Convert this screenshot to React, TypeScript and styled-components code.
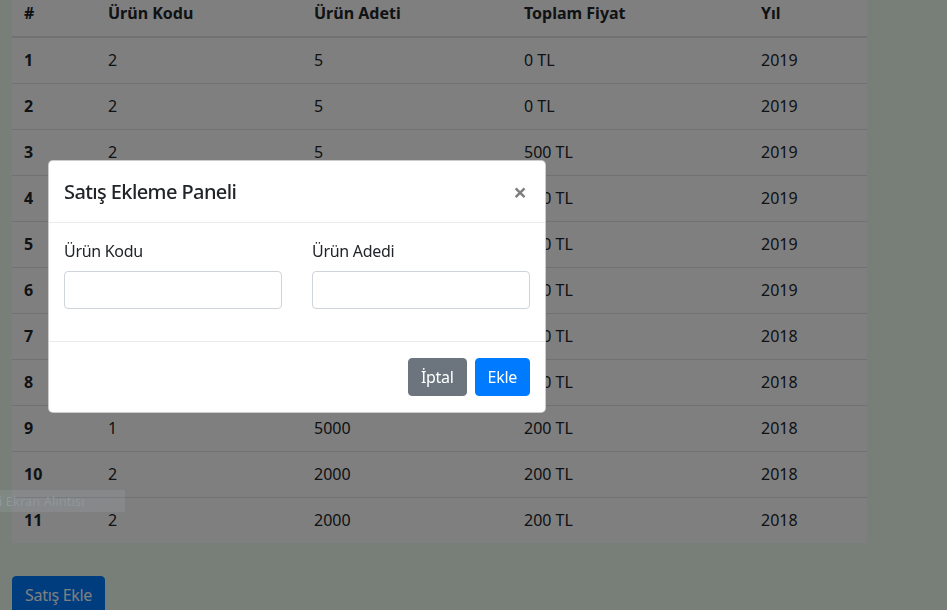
import React from "react";
import styled, { createGlobalStyle } from "styled-components";

const GlobalStyle = createGlobalStyle`
  * { box-sizing: border-box; }
  html, body {
    margin: 0;
    padding: 0;
    background: #f0fff0;
    color: #212529;
    font-family: "Noto Sans", "Open Sans", sans-serif;
    font-size: 16px;
    overflow: hidden;
  }
`;

const Page = styled.div`
  padding: 0 12px;
  height: 610px;
`;

const Table = styled.table`
  width: 855px;
  border-collapse: collapse;
  background: #fff;
  table-layout: fixed;
`;

const Th = styled.th<{ w: number }>`
  width: ${(p) => p.w}px;
  text-align: left;
  font-weight: 700;
  padding: 3px 12px 12px;
  line-height: 21px;
  border-bottom: 2px solid #dee2e6;
`;

const Td = styled.td<{ bold?: boolean; last?: boolean }>`
  padding: 12px;
  line-height: 21px;
  font-weight: ${(p) => (p.bold ? 700 : 400)};
  border-bottom: ${(p) => (p.last ? "none" : "1px solid #dee2e6")};
`;

const Button = styled.button<{ variant: "primary" | "secondary" }>`
  font-family: inherit;
  font-size: 16px;
  line-height: 24px;
  padding: 6px 12px;
  border-radius: 4px;
  border: 1px solid ${(p) => (p.variant === "primary" ? "#007bff" : "#6c757d")};
  background: ${(p) => (p.variant === "primary" ? "#007bff" : "#6c757d")};
  color: #fff;
  letter-spacing: -0.3px;
  cursor: pointer;
`;

const AddButton = styled(Button)`
  margin-top: 33px;
`;

const Backdrop = styled.div`
  position: fixed;
  inset: 0;
  background: rgba(0, 0, 0, 0.5);
`;

const Snip = styled.div`
  position: fixed;
  left: 0;
  top: 490px;
  width: 125px;
  height: 22px;
  background: rgba(200, 220, 235, 0.1);
  color: #8e979c;
  font-size: 13px;
  line-height: 22px;
  white-space: nowrap;
  overflow: hidden;
  text-indent: -1px;
`;

const Modal = styled.div`
  position: fixed;
  left: 48px;
  top: 160px;
  width: 498px;
  background: #fff;
  border: 1px solid rgba(0, 0, 0, 0.2);
  border-radius: 5px;
`;

const ModalHeader = styled.div`
  display: flex;
  align-items: center;
  justify-content: space-between;
  padding: 16px 15px 15px;
  border-bottom: 1px solid #e9ecef;
`;

const Title = styled.h5`
  margin: 0;
  font-size: 20px;
  font-weight: 500;
  line-height: 30px;
  letter-spacing: -0.6px;
`;

const Close = styled.span`
  font-size: 24px;
  font-weight: 700;
  line-height: 1;
  color: #000;
  opacity: 0.5;
  margin-right: 3px;
`;

const ModalBody = styled.div`
  display: grid;
  grid-template-columns: minmax(0, 1fr) minmax(0, 1fr);
  column-gap: 30px;
  padding: 16px 15px 32px;
  border-bottom: 1px solid #e9ecef;
`;

const Field = styled.div`
  display: flex;
  flex-direction: column;
  gap: 8px;
  min-width: 0;
`;

const Label = styled.label`
  line-height: 24px;
  letter-spacing: -0.3px;
`;

const Input = styled.input`
  width: 100%;
  min-width: 0;
  height: 38px;
  border: 1px solid #ced4da;
  border-radius: 4px;
  font-family: inherit;
  font-size: 16px;
  padding: 6px 12px;
`;

const ModalFooter = styled.div`
  display: flex;
  justify-content: flex-end;
  gap: 8px;
  padding: 16px 15px;
`;

const rows = [
  [1, 2, 5, "0 TL", 2019],
  [2, 2, 5, "0 TL", 2019],
  [3, 2, 5, "500 TL", 2019],
  [4, 2, 5, "500 TL", 2019],
  [5, 2, 5, "500 TL", 2019],
  [6, 2, 5, "500 TL", 2019],
  [7, 1, 5000, "200 TL", 2018],
  [8, 1, 5000, "200 TL", 2018],
  [9, 1, 5000, "200 TL", 2018],
  [10, 2, 2000, "200 TL", 2018],
  [11, 2, 2000, "200 TL", 2018],
];

export default function App() {
  return (
    <>
      <GlobalStyle />
      <Page>
        <Table>
          <thead>
            <tr>
              <Th w={84}>#</Th>
              <Th w={206}>Ürün Kodu</Th>
              <Th w={210}>Ürün Adeti</Th>
              <Th w={237}>Toplam Fiyat</Th>
              <Th w={118}>Yıl</Th>
            </tr>
          </thead>
          <tbody>
            {rows.map((r, i) => {
              const last = i === rows.length - 1;
              return (
                <tr key={r[0]}>
                  <Td bold last={last}>{r[0]}</Td>
                  <Td last={last}>{r[1]}</Td>
                  <Td last={last}>{r[2]}</Td>
                  <Td last={last}>{r[3]}</Td>
                  <Td last={last}>{r[4]}</Td>
                </tr>
              );
            })}
          </tbody>
        </Table>
        <AddButton variant="primary">Satış Ekle</AddButton>
      </Page>
      <Backdrop />
      <Snip>i Ekran Alıntısı</Snip>
      <Modal>
        <ModalHeader>
          <Title>Satış Ekleme Paneli</Title>
          <Close>×</Close>
        </ModalHeader>
        <ModalBody>
          <Field>
            <Label>Ürün Kodu</Label>
            <Input />
          </Field>
          <Field>
            <Label>Ürün Adedi</Label>
            <Input />
          </Field>
        </ModalBody>
        <ModalFooter>
          <Button variant="secondary">İptal</Button>
          <Button variant="primary">Ekle</Button>
        </ModalFooter>
      </Modal>
    </>
  );
}
